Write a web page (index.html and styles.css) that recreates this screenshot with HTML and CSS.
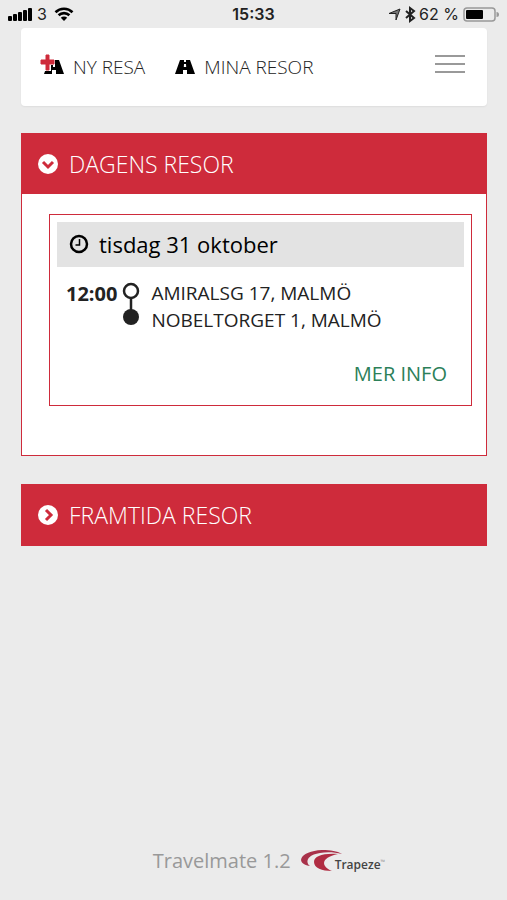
FILE: index.html
```html
<!DOCTYPE html>
<html lang="sv">
<head>
  <meta charset="UTF-8">
  <meta name="viewport" content="width=device-width, initial-scale=1">
  <title>Travelmate</title>
  <link rel="stylesheet" href="styles.css">
</head>
<body>

<div class="status">
  <div class="status-left">
    <svg width="24" height="14" viewBox="0 0 24 14">
      <rect x="0" y="9" width="4" height="5" rx="1"/>
      <rect x="5" y="7" width="4" height="7" rx="1"/>
      <rect x="10" y="5" width="4" height="9" rx="1"/>
      <rect x="15" y="3" width="4" height="11" rx="1"/>
      <rect x="20" y="1" width="4" height="13" rx="1"/>
    </svg>
    <span>3</span>
    <svg class="wifi" width="20" height="14" viewBox="0 0 20 14">
      <path d="M1.5 5.2a12.2 12.2 0 0 1 17 0M4.6 8.3a7.8 7.8 0 0 1 10.8 0" fill="none" stroke="#000" stroke-width="2.6"/>
      <path d="M10 14l-3.2-3.3a4.6 4.6 0 0 1 6.4 0z"/>
    </svg>
  </div>
  <div class="status-time">15:33</div>
  <div class="status-right">
    <svg width="13" height="13" viewBox="0 0 13 13">
      <path d="M1 5.500L12 1 8 12V5.500z" fill="#777" stroke="#222" stroke-linejoin="round"/>
    </svg>
    <svg width="10" height="15" viewBox="0 0 10 15">
      <path d="M1 4l8 7-4 3V1l4 3-8 7" fill="none" stroke="#222" stroke-width="2"/>
    </svg>
    <span>62 %</span>
    <svg width="36" height="15" viewBox="0 0 36 15">
      <rect x="1" y="1" width="31" height="13" rx="3" fill="none" stroke="#999" stroke-width="1.5"/>
      <rect x="3" y="3" width="17" height="9" rx="1"/>
      <path d="M33.5 5a2.5 2.5 0 0 1 0 5z" fill="#999"/>
    </svg>
  </div>
</div>

<div class="page">
  <nav class="topnav">
    <a class="nav-link" href="#ny">
      <svg width="24" height="22" viewBox="0 0 24 22">
        <path d="M9 4h4v2h2V4h4l5 14h-8v-4h-4v4H4z"/>
        <path d="M13 8h2v3h-2z" fill="#fff"/>
        <path d="M5-1h5v5h5v5h-4v6H5V9H0V4h5z" fill="#fff"/>
        <path d="M6-1h3v5h5v4H9v6H6V8H1V4h5z" fill="#ce2b3b" stroke="#ce2b3b"/>
      </svg>
      <span>NY RESA</span>
    </a>
    <a class="nav-link" href="#mina">
      <svg width="20" height="22" viewBox="0 0 20 22">
        <path d="M5 4h4v2h2V4h4l5 14h-8v-4H8v4H0z"/>
        <path d="M9 8h2l.2 3H8.800z" fill="#fff"/>
      </svg>
      <span>MINA RESOR</span>
    </a>
    <button class="menu-btn" type="button" aria-label="Meny">
      <span></span>
      <span></span>
      <span></span>
    </button>
  </nav>

  <section class="panel">
    <button class="panel-head" type="button" aria-expanded="true">
      <svg width="20" height="20" viewBox="0 0 20 20">
        <circle cx="10" cy="10" r="10" fill="#fff"/>
        <path d="M5 8l5 5 5-5" fill="none" stroke="#ce2b3b" stroke-width="3"/>
      </svg>
      <span>DAGENS RESOR</span>
    </button>
    <div class="panel-body">
      <div class="trip">
        <div class="trip-date">
          <svg width="20" height="20" viewBox="0 0 20 20">
            <circle cx="10" cy="10" r="8" fill="none" stroke="#000" stroke-width="2.5"/>
            <path d="M10.5 5v6h-4" fill="none" stroke="#000" stroke-width="1.5"/>
          </svg>
          <span>tisdag 31 oktober</span>
        </div>
        <div class="trip-route">
          <strong>12:00</strong>
          <svg width="18" height="46" viewBox="0 0 18 46">
            <circle cx="9" cy="11" r="7" fill="#fff" stroke="#222" stroke-width="2.5"/>
            <path d="M9 18v14" stroke="#222" stroke-width="2.5"/>
            <circle cx="9" cy="37" r="8" fill="#222"/>
          </svg>
          <div class="trip-stops">
            <div>AMIRALSG 17, MALMÖ</div>
            <div>NOBELTORGET 1, MALMÖ</div>
          </div>
        </div>
        <a class="trip-more" href="#info">MER INFO</a>
      </div>
    </div>
  </section>

  <section class="panel">
    <button class="panel-head" type="button" aria-expanded="false">
      <svg width="20" height="20" viewBox="0 0 20 20">
        <circle cx="10" cy="10" r="10" fill="#fff"/>
        <path d="M8 5l5 5-5 5" fill="none" stroke="#ce2b3b" stroke-width="3"/>
      </svg>
      <span>FRAMTIDA RESOR</span>
    </button>
  </section>
</div>

<footer class="footer">
  <span>Travelmate 1.2</span>
  <div class="logo">
    <svg width="42" height="22" viewBox="0 0 42 22">
      <path d="M9 16C-6 14-2 1 21 0c9 0 15 1 20 4C33 2 25 2 19 3 6 5 4 12 9 16z" fill="#a8324a"/>
      <path d="M37 4C22 3 13 6 13 12c0 6 8 9 18 9C21 17 18 8 37 4z" fill="#b02c42"/>
    </svg>
    <span class="logo-name">Trapeze<sup>™</sup></span>
  </div>
</footer>

</body>
</html>
```
FILE: styles.css
```css
* { margin: 0; padding: 0; box-sizing: border-box; }
body { min-height: 100vh; display: flex; flex-direction: column;
  background: #ebebeb; color: #222;
  font-family: "Open Sans", "Noto Sans", sans-serif; }
a { text-decoration: none; }
button { border: 0; background: none; font: inherit; cursor: pointer; }
svg { flex: none; overflow: visible; }

.status { display: grid; grid-template-columns: 1fr auto 1fr;
  align-items: center; height: 28px; padding: 0 8px;
  font-family: Inter, "Liberation Sans", sans-serif;
  font-size: 16px; }
.status-left, .status-right { display: flex; align-items: center;
  gap: 5px; }
.wifi { margin-left: 2px; }
.status-right { justify-content: flex-end; gap: 4px; }
.status-time { font-weight: 600; }

.page { padding: 0 20px 0 21px; }
.topnav { display: flex; align-items: center; gap: 30px;
  height: 78px; padding: 0 22px 0 19px; background: #fff;
  border-radius: 4px; box-shadow: 0 1px 2px rgba(0,0,0,.06); }
.nav-link { display: flex; align-items: center; gap: 9px;
  color: #222; font-size: 19px; font-weight: 300; }
.menu-btn { display: flex; flex-direction: column; gap: 6px;
  width: 30px; margin-left: auto; padding-bottom: 6px; }
.menu-btn span { height: 2px; background: #999; }

.panel { margin-top: 28px; border: 1px solid #ce2b3b;
  background: #fff; }
.topnav + .panel { margin-top: 27px; }
.panel-head { display: flex; align-items: center; gap: 11px;
  width: 100%; height: 60px; padding: 0 16px;
  background: #ce2b3b; color: #fff;
  font-size: 23px; font-weight: 300; }
.panel-body { padding: 20px 14px 49px 27px; }

.trip { display: flex; flex-direction: column;
  padding: 7px 7px 18px; border: 1px solid #ce2b3b; }
.trip-date { display: flex; align-items: center; gap: 10px;
  height: 45px; padding: 0 12px 2px; background: #e3e3e3;
  color: #000; font-size: 22px; }
.trip-route { display: flex; align-items: flex-start; gap: 5px;
  margin-top: 13px; padding-left: 9px;
  font-size: 19px; line-height: 27px; }
.trip-route strong { font-size: 20px; }
.trip-stops { margin-left: 6px; }
.trip-more { align-self: flex-end; margin-top: 26px;
  padding-right: 17px; color: #2c8059;
  font-size: 20px; line-height: 27px; }

.footer { display: flex; justify-content: center;
  align-items: center; gap: 10px; margin-top: auto;
  padding: 0 0 26px 31px; color: #999; font-size: 20px; }
.logo { display: flex; align-items: flex-end; }
.logo-name { margin-left: -8px; color: #444;
  font-size: 12px; font-weight: 600; line-height: 14px; }
.logo-name sup { color: #999; font-size: 6px; }
```
